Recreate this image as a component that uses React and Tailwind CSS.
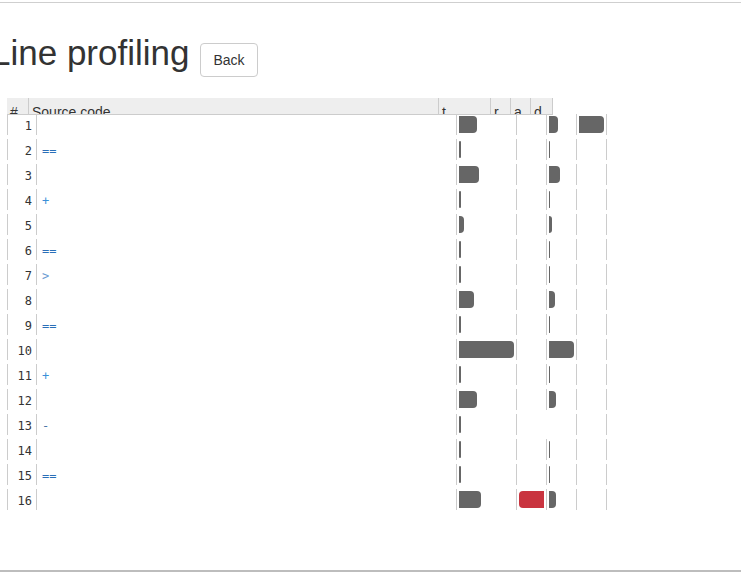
const ROWS = [
  { n: 1, code: "", t: 18, a: 9, d: 25 },
  { n: 2, code: "==", t: 2, a: 1 },
  { n: 3, code: "", t: 20, a: 11 },
  { n: 4, code: "+", t: 2, a: 1 },
  { n: 5, code: "", t: 5, a: 3 },
  { n: 6, code: "==", t: 2, a: 1 },
  { n: 7, code: ">", t: 2, a: 1 },
  { n: 8, code: "", t: 15, a: 6 },
  { n: 9, code: "==", t: 2, a: 1 },
  { n: 10, code: "", t: 55, a: 25 },
  { n: 11, code: "+", t: 2, a: 1 },
  { n: 12, code: "", t: 18, a: 7 },
  { n: 13, code: "-", t: 2, noA: true },
  { n: 14, code: "", t: 2, a: 1 },
  { n: 15, code: "==", t: 2, a: 1 },
  { n: 16, code: "", t: 22, r: 25, a: 7 },
];

const CODE_COLORS = {
  "==": "text-[#2a6fb8]",
  "+": "text-[#3a90d8]",
  ">": "text-[#6c9bd2]",
  "-": "text-[#4a77a6]",
};

function Bar({ w, red }) {
  if (!w) return null;
  const thin = w <= 2;
  return (
    <div
      className={`h-full ${red ? "bg-[#c9343f] rounded-l-[4px]" : "bg-[#666]"} ${
        thin ? "rounded-[1px]" : red ? "" : "rounded-r-[4px]"
      }`}
      style={{ width: w }}
    />
  );
}

export default function App() {
  return (
    <div className="w-[741px] h-[572px] overflow-hidden bg-white pt-[2px]">
      <div className="h-[570px] border-t border-b-2 border-t-[#cfcfcf] border-b-[#bdbdbd] overflow-hidden">
        {/* TITLE */}
        <div className="h-[95px] pt-[30px] flex items-baseline">
          <h1
            className="ml-[-9px] text-[35px] leading-[40px] text-[#333] font-normal"
            style={{ fontFamily: '"Liberation Sans", Arial, sans-serif' }}
          >
            Line profiling
          </h1>
          <button
            className="ml-[11px] h-[34px] px-[12px] py-[6px] border border-[#ccc] rounded-[4px] bg-white text-[14px] leading-[20px] text-[#333]"
            style={{ fontFamily: '"Liberation Sans", Arial, sans-serif' }}
          >
            Back
          </button>
        </div>

        {/* TABLE */}
        <div className="ml-[7px]" style={{ fontFamily: '"Liberation Sans", Arial, sans-serif' }}>
          <div className="flex w-[546px] h-[17px] bg-[#eee] border-b border-r border-[#ccc] text-[14px] leading-[20px] text-[#333]">
            <div className="w-[21px] pl-[3px] pt-[4px] overflow-hidden">#</div>
            <div className="w-[410px] border-l border-[#ccc] pl-[3px] pt-[4px] overflow-hidden">Source code</div>
            <div className="w-[52px] border-l border-[#ccc] pl-[3px] pt-[4px] overflow-hidden">t</div>
            <div className="w-[20px] border-l border-[#ccc] pl-[3px] pt-[4px] overflow-hidden">r</div>
            <div className="w-[20px] border-l border-[#ccc] pl-[3px] pt-[4px] overflow-hidden">a</div>
            <div className="w-[22px] border-l border-[#ccc] pl-[3px] pt-[4px] overflow-hidden">d</div>
          </div>

          <div
            className="mt-[-1px] flex flex-col gap-[4px] text-[12px] leading-[21px]"
            style={{ fontFamily: '"DejaVu Sans Mono", "Liberation Mono", monospace' }}
          >
            {ROWS.map((row) => (
              <div key={row.n} className="flex h-[21px]">
                <div className="w-[29px] border-l border-[#ccc] text-right pr-[4px] pt-[2px] text-[#333]">{row.n}</div>
                <div className={`w-[420px] border-l border-[#ccc] pl-[5px] pt-[2px] ${CODE_COLORS[row.code] || ""}`}>
                  {row.code}
                </div>
                <div className="w-[60px] border-l border-[#ccc] pl-[2px] py-[2px]">
                  <Bar w={row.t} />
                </div>
                <div className="w-[30px] border-l border-[#ccc] pl-[2px] py-[2px]">
                  <Bar w={row.r} red />
                </div>
                <div className={`w-[30px] border-l ${row.noA ? "border-transparent" : "border-[#ccc]"} pl-[2px] py-[2px]`}>
                  <Bar w={row.a} />
                </div>
                <div className="w-[31px] border-l border-r border-[#ccc] pl-[2px] py-[2px]">
                  <Bar w={row.d} />
                </div>
              </div>
            ))}
          </div>
        </div>
      </div>
    </div>
  );
}
